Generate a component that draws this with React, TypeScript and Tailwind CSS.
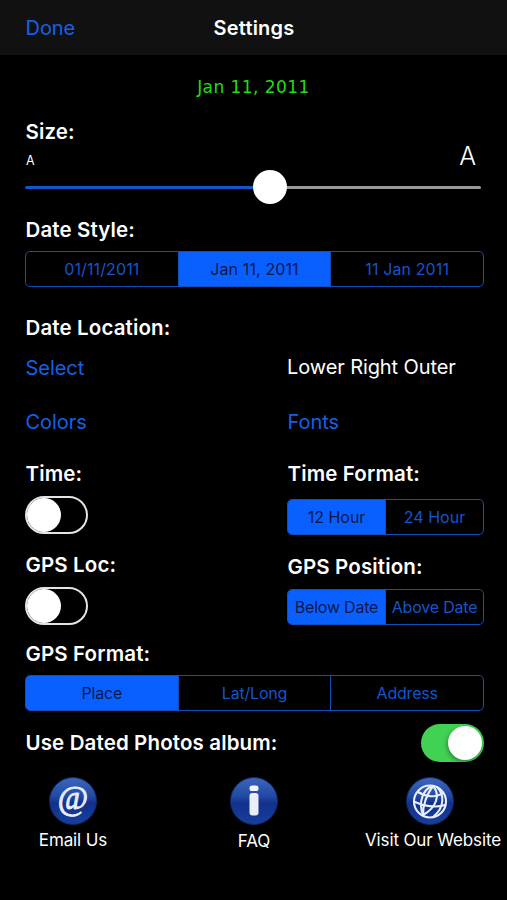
import React, { useState } from "react";

function Label({ children, className = "leading-7" }: { children: React.ReactNode; className?: string }) {
  return (
    <h2 className={`h-7 whitespace-nowrap pl-[0.5px] text-[20.5px] font-semibold tracking-[0.13px] text-white ${className}`}>{children}</h2>
  );
}

function LinkButton({ children, className = "" }: { children: React.ReactNode; className?: string }) {
  return (
    <button className={`h-7 whitespace-nowrap pl-[0.5px] text-left text-[20px] leading-[29px] tracking-[-0.05px] text-[#1560e8] ${className}`}>{children}</button>
  );
}

function Segmented({ options, initial, tracking = "" }: { options: string[]; initial: number; tracking?: string }) {
  const [active, setActive] = useState(initial);
  return (
    <div className={`flex h-9 w-full overflow-hidden rounded-[5px] border-[1.5px] border-[#124fb8] text-[16px] ${tracking}`}>
      {options.map((option, i) => (
        <button
          key={option}
          onClick={() => setActive(i)}
          className={`min-w-0 flex-1 basis-0 whitespace-nowrap ${i > 0 ? "border-l border-[#124fb8]" : ""} ${
            i === active ? "bg-[#0a60ff] text-[#04184a]" : "text-[#1455cc]"
          }`}
        >
          {option}
        </button>
      ))}
    </div>
  );
}

function Switch({ initial = false }: { initial?: boolean }) {
  const [on, setOn] = useState(initial);
  return (
    <button
      role="switch"
      aria-checked={on}
      onClick={() => setOn(!on)}
      className={`flex h-[38px] w-[63px] items-center rounded-full ${
        on ? "justify-end bg-[#41d154] pr-[2px]" : "border-2 border-[#e4e4e4]"
      }`}
    >
      <span className={`rounded-full bg-white ${on ? "size-[34px] shadow-[-1px_2px_4px_rgba(0,0,0,0.35)]" : "size-[34px]"}`} />
    </button>
  );
}

function Badge({ id, children }: { id: string; children: React.ReactNode }) {
  return (
    <svg viewBox="0 0 48 48" className="size-12" fill="none">
      <defs>
        <linearGradient id={id} x1="0" y1="0" x2="0" y2="1">
          <stop offset="0" stopColor="#3c66bd" />
          <stop offset="0.4" stopColor="#2249a4" />
          <stop offset="0.55" stopColor="#12318c" />
          <stop offset="1" stopColor="#173f9e" />
        </linearGradient>
      </defs>
      <circle cx="24" cy="24" r="23.5" fill={`url(#${id})`} stroke="#12295f" strokeWidth="1" />
      {children}
    </svg>
  );
}

export default function App() {
  return (
    <div className="h-[900px] w-[507px] overflow-hidden bg-black font-['Inter',sans-serif] text-white">
      <header className="grid h-[55px] grid-cols-[1fr_auto_1fr] items-center bg-[#111111] px-[25px]">
        <LinkButton>Done</LinkButton>
        <h1 className="pl-px pt-px text-[20px] font-semibold leading-7 tracking-[0.2px]">Settings</h1>
      </header>
      <div className="flex h-[62px] items-center justify-center pt-[3px] font-['DejaVu_Sans',sans-serif] text-[17px] tracking-[0.45px] text-[#22dd11]">
        Jan 11, 2011
      </div>
      <main className="pl-[25px] pr-[23px]">
        <Label className="leading-[29px]">Size:</Label>
        <div className="flex h-[26px] items-baseline justify-between pr-2">
          <span className="pl-px text-[12.5px] leading-none">A</span>
          <span className="text-[25px] font-light leading-[23px]">A</span>
        </div>
        <div className="flex h-8 items-center pr-[3px]">
          <div className="h-[3px] w-[228px] rounded-l-full bg-[#1355cc]" />
          <div className="-mt-px size-[34px] shrink-0 rounded-full bg-white" />
          <div className="h-[3px] flex-1 rounded-r-full bg-[#999]" />
        </div>
        <Label className="mt-[13px] leading-7">Date Style:</Label>
        <div className="mt-[7px]">
          <Segmented options={["01/11/2011", "Jan 11, 2011", "11 Jan 2011"]} initial={1} tracking="tracking-[0.12px]" />
        </div>
        <Label className="mt-[27px] leading-7">Date Location:</Label>
        <div className="mt-3 grid grid-cols-[262px_1fr] gap-y-[26px]">
          <LinkButton>Select</LinkButton>
          <span className="whitespace-nowrap text-[20px] leading-[27px] tracking-[-0.1px]">Lower Right Outer</span>
          <LinkButton>Colors</LinkButton>
          <LinkButton>Fonts</LinkButton>
        </div>
        <div className="mt-6 grid grid-cols-[262px_1fr]">
          <section>
            <Label>Time:</Label>
            <div className="mt-2"><Switch /></div>
            <Label className="mt-[17px] leading-7">GPS Loc:</Label>
            <div className="mt-2"><Switch /></div>
          </section>
          <section>
            <Label>Time Format:</Label>
            <div className="mt-[11px]"><Segmented options={["12 Hour", "24 Hour"]} initial={0} /></div>
            <Label className="mt-[18px] leading-7">GPS Position:</Label>
            <div className="mt-2"><Segmented options={["Below Date", "Above Date"]} initial={0} tracking="tracking-[-0.2px]" /></div>
          </section>
        </div>
        <Label className="mt-[15px] leading-7">GPS Format:</Label>
        <div className="mt-[7px]">
          <Segmented options={["Place", "Lat/Long", "Address"]} initial={0} tracking="tracking-[-0.2px]" />
        </div>
        <div className="mt-[13px] flex items-center justify-between">
          <Label>Use Dated Photos album:</Label>
          <Switch initial />
        </div>
      </main>
      <footer className="mt-[15px] grid grid-cols-[146px_216px_145px] text-[17px] leading-[30px] tracking-[-0.12px]">
        <a className="flex flex-col items-center">
          <Badge id="email">
            <text x="24" y="31.5" textAnchor="middle" fontFamily="Liberation Serif" fontSize="33" fill="#e8eefb" stroke="#e8eefb" strokeWidth="0.9">@</text>
          </Badge>
          <span>Email Us</span>
        </a>
        <a className="flex flex-col items-center">
          <Badge id="faq">
            <rect x="19.5" y="8.5" width="9" height="5.5" rx="2.6" fill="#f3f6fd" />
            <rect x="19.5" y="16" width="9" height="22.5" rx="3" fill="#e9eefa" />
          </Badge>
          <span className="pt-px">FAQ</span>
        </a>
        <a className="flex flex-col items-end pr-[6px]">
          <div className="mr-[47px]">
            <Badge id="web">
              <g stroke="#e8eefb" strokeWidth="2.1" strokeLinecap="round">
                <circle cx="24" cy="24.5" r="16" />
                <path d="M26 9C17 13 12 25 17 38M27 9C21 17 17 28 17 38M27 9C35 18 30 31 17 38M31 10C39 18 38 31 28 39" />
                <path d="M12 15C20 20 30 21 37 16M9 25C17 29 30 31 39 28" />
              </g>
            </Badge>
          </div>
          <span className="whitespace-nowrap">Visit Our Website</span>
        </a>
      </footer>
    </div>
  );
}
